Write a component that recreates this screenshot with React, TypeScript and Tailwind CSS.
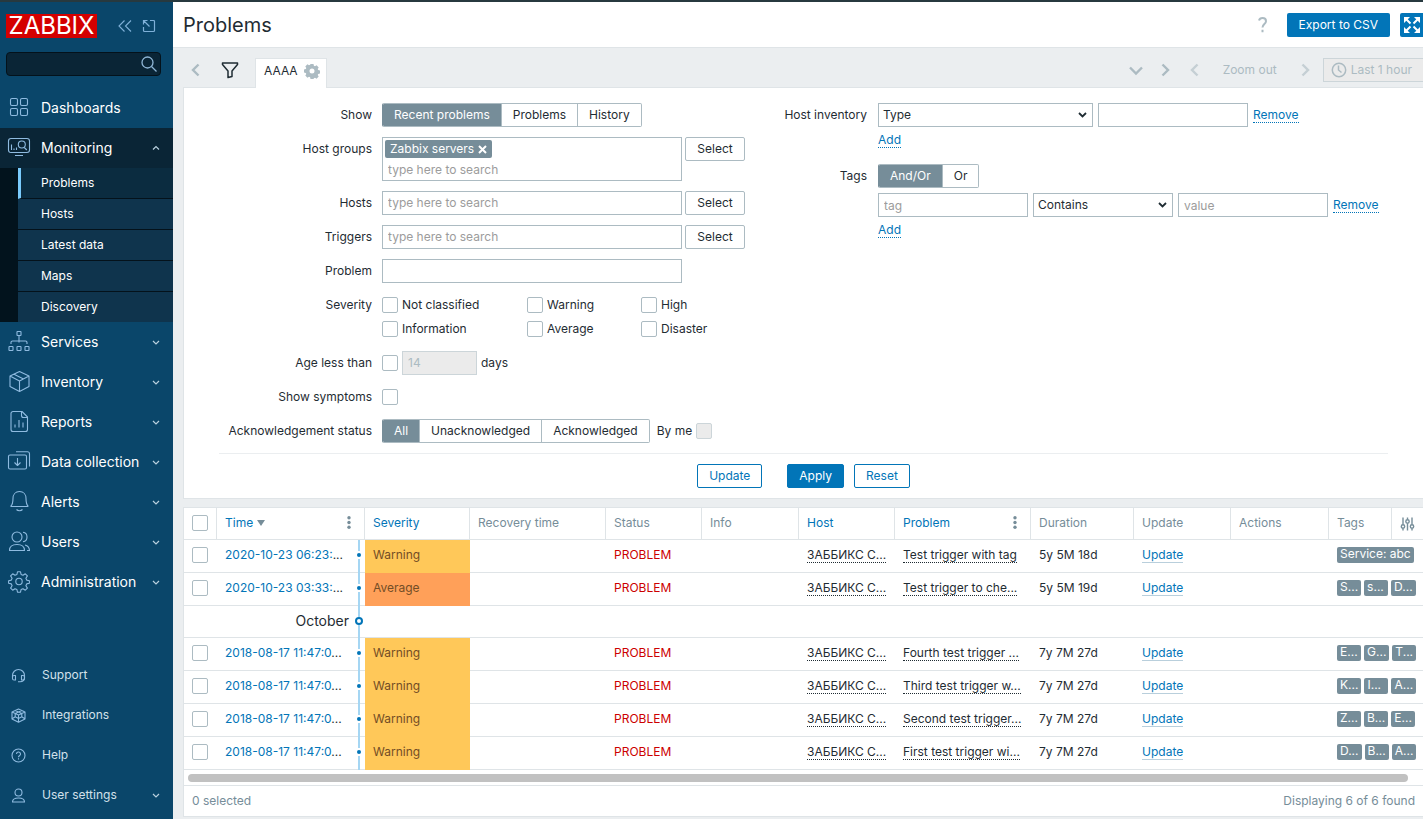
import type { ReactNode } from "react";

interface NavItem {
  label: string;
  icon: ReactNode;
}

interface ProblemRow {
  time: string;
  severity: "Warning" | "Average";
  problem: string;
  duration: string;
  tags: string[];
}

const mainMenu: NavItem[] = [
  {
    label: "Services",
    icon: (
      <>
        <rect x="9" y="0.5" width="4" height="4" rx="0.5" />
        <path d="M11 4.500v7M3 13v-1.500a1.500 1.500 0 0 1 1.500-1.500h13a1.500 1.500 0 0 1 1.500 1.500V13" />
        <rect x="1" y="15.500" width="4" height="4" rx="0.5" />
        <rect x="9" y="15.500" width="4" height="4" rx="0.5" />
        <rect x="17" y="15.500" width="4" height="4" rx="0.5" />
      </>
    ),
  },
  {
    label: "Inventory",
    icon: <path d="M11.500.500 21 5v10.500L11.500 20.500 2 15.500V5zM2 5l9.500 5L21 5M11.500 10v10.500M6 3.200l9.500 4.800" />,
  },
  {
    label: "Reports",
    icon: (
      <>
        <path d="M5 .5h9l5.500 5.500v12.500a2 2 0 0 1-2 2h-12.500a2 2 0 0 1-2-2V2.500a2 2 0 0 1 2-2zM13.500.500v4a2 2 0 0 0 2 2h4" />
        <path d="M7 16.500v-3M11 16.500V9M15 16.500v-5" />
      </>
    ),
  },
  {
    label: "Data collection",
    icon: (
      <>
        <rect x="0.5" y="4" width="18" height="14" rx="1.500" />
        <path d="M8 .8h11.500a2 2 0 0 1 2 2v12.700M9.500 7v7.500M6.500 11.500l3 3 3-3" />
      </>
    ),
  },
  {
    label: "Alerts",
    icon: <path d="M2.500 15.500h17.800M2.500 15.500c2.500-2 2.500-4.500 2.500-8 0-4 2.500-7 6.500-7s6.500 3 6.500 7c0 3.500.2 6 2.300 8M8.500 18.500c1.500 1.600 4.500 1.600 6 0" />,
  },
  {
    label: "Users",
    icon: (
      <>
        <circle cx="9" cy="6" r="5" />
        <path d="M1.500 19.500c0-4 3-6 7.500-6s7.500 2 7.500 6zM15 1.300c2.500.3 4 2.200 4 4.700s-1.500 4.400-4 4.700M17 14c2.500.6 4.300 2.500 4.500 5.500h-2.500" />
      </>
    ),
  },
  {
    label: "Administration",
    icon: (
      <>
        <circle cx="11" cy="10.500" r="3.200" />
        <path d="M9.500.800h3l.6 2.700 1.900.8 2.300-1.500 2.100 2.100-1.500 2.300.8 1.900 2.700.6v2.600l-2.700.6-.8 1.900 1.500 2.300-2.100 2.100-2.300-1.500-1.900.8-.6 2.700h-3l-.6-2.700-1.900-.8-2.300 1.500-2.100-2.100 1.500-2.300-.8-1.900-2.700-.6V9.700l2.700-.6.8-1.900-1.500-2.300 2.100-2.100L7 4.300l1.900-.8z" />
      </>
    ),
  },
];

const userMenu: NavItem[] = [
  {
    label: "Support",
    icon: (
      <>
        <path d="M1.500 9V7.500a6 6 0 0 1 12 0V9.500c0 2.500-1.500 4.200-4.500 4.200H7" />
        <path d="M4.500 7.500v4.500h-1.500a1.500 1.500 0 0 1-1.500-1.500V9a1.500 1.500 0 0 1 1.500-1.500zM10.500 7.500v4.500H12a1.500 1.500 0 0 0 1.500-1.500V9A1.500 1.500 0 0 0 12 7.500z" />
      </>
    ),
  },
  {
    label: "Integrations",
    icon: (
      <path d="M7.500 1 14 4v7l-6.500 3.300L1 11V4zM1 4l6.500 3L14 4M7.500 7v7.300M4.200 2.600l6.600 3v3.200M10.800 2.600l-6.600 3v3.200M1.200 10.800l3-2 3.300 1.600 3.300-1.600 3 2" />
    ),
  },
  {
    label: "Help",
    icon: (
      <>
        <circle cx="7.500" cy="7.500" r="6.500" />
        <path d="M5.500 6a2 2 0 1 1 3 1.700c-.7.400-1 .7-1 1.500M7.500 10.300v1.200" />
      </>
    ),
  },
  {
    label: "User settings",
    icon: (
      <>
        <circle cx="7.500" cy="4.500" r="3.500" />
        <path d="M1.500 14c0-2.700 2-4 6-4s6 1.300 6 4z" />
      </>
    ),
  },
];

const rows: (ProblemRow | string)[] = [
  { time: "2020-10-23 06:23:", severity: "Warning", problem: "Test trigger with tag", duration: "5y 5M 18d", tags: ["Service: abc"] },
  { time: "2020-10-23 03:33:", severity: "Average", problem: "Test trigger to che...", duration: "5y 5M 19d", tags: ["S...", "s...", "D..."] },
  "October",
  { time: "2018-08-17 11:47:0", severity: "Warning", problem: "Fourth test trigger ...", duration: "7y 7M 27d", tags: ["E...", "G...", "T..."] },
  { time: "2018-08-17 11:47:0", severity: "Warning", problem: "Third test trigger w...", duration: "7y 7M 27d", tags: ["K...", "I...", "A..."] },
  { time: "2018-08-17 11:47:0", severity: "Warning", problem: "Second test trigger...", duration: "7y 7M 27d", tags: ["Z...", "B...", "E..."] },
  { time: "2018-08-17 11:47:0", severity: "Warning", problem: "First test trigger wi...", duration: "7y 7M 27d", tags: ["D...", "B...", "A..."] },
];

const inputClass = "h-6 border border-[#acbbc2] bg-white px-[5px] placeholder:text-[#9c9c9c] outline-none";
const cellClass = "border-b border-[#dfe4e7] p-0 pl-2 pb-0.5";
const linkClass = "text-[#0275b8] border-b border-dotted border-[#0275b8] leading-[15px]";

function Chevron({ up = false }: { up?: boolean }) {
  return (
    <svg className="ml-auto mr-[13px] shrink-0" width="8" height="8" viewBox="0 0 8 8" fill="none" stroke="#b9d0de" strokeWidth="1.200">
      <path d={up ? "M1 5.500 4 2.500 7 5.500" : "M1 3 4 6 7 3"} />
    </svg>
  );
}

function Arrow({ dir, className = "" }: { dir: "left" | "right" | "down"; className?: string }) {
  const d = { left: "M9.500 1.500 4 7l5.500 5.500", right: "M4.500 1.500 10 7l-5.500 5.500", down: "M1 4.500 7 10.500 13 4.500" }[dir];
  return (
    <svg className={className} width="14" height="14" viewBox="0 0 14 14" fill="none" stroke="currentColor" strokeWidth="2.400">
      <path d={d} />
    </svg>
  );
}

function NavIcon({ children }: { children: ReactNode }) {
  return (
    <svg className="shrink-0 overflow-visible" width="22" height="22" viewBox="0 0 22 22" fill="none" stroke="#8fbbe0" strokeWidth="1.100" strokeLinejoin="round">
      {children}
    </svg>
  );
}

function Sidebar() {
  return (
    <aside className="w-[173px] shrink-0 flex flex-col bg-[#0a466a] text-white">
      <div className="flex items-center h-12 pl-1.5">
        <a href="#" className="flex items-center justify-center w-[91px] h-6 bg-[#d40000] text-2xl leading-6">ZABBIX</a>
        <button className="ml-[21px]" aria-label="Collapse sidebar">
          <svg width="14" height="14" viewBox="0 0 14 14" fill="none" stroke="#7fb0d8" strokeWidth="1.100">
            <path d="M6.500 1.500 1 7l5.500 5.500M13 1.500 7.500 7l5.500 5.500" />
          </svg>
        </button>
        <button className="ml-[10px]" aria-label="Hide sidebar">
          <svg width="14" height="14" viewBox="0 0 14 14" fill="none" stroke="#7fb0d8" strokeWidth="1.200">
            <path d="M1.500 8v3.500a1 1 0 0 0 1 1h9a1 1 0 0 0 1-1v-9a1 1 0 0 0-1-1H8M7.500 7.500l-6-6M1.500 5.500v-4h4" />
          </svg>
        </button>
      </div>
      <div className="flex items-center mx-1.5 mr-3 mt-[2px] h-6 rounded-sm border border-[#04121b] bg-[#0a2536]">
        <input type="text" aria-label="Search" className="min-w-0 flex-1 bg-transparent px-1 outline-none" />
        <button aria-label="Search" className="mr-[3px]">
          <svg width="16" height="16" viewBox="0 0 16 16" fill="none" stroke="#8fb6d6" strokeWidth="1.300">
            <circle cx="6.500" cy="6.500" r="5.500" />
            <path d="m10.500 10.500 5 5" />
          </svg>
        </button>
      </div>

      <nav className="mt-3 text-sm">
        <a href="#" className="flex items-center h-10 pl-2 gap-[11px]">
          <NavIcon>
            <rect x="2.500" y="1.500" width="7" height="7" rx="1.500" />
            <rect x="12.500" y="1.500" width="7" height="7" rx="1.500" />
            <rect x="2.500" y="11.500" width="7" height="7" rx="1.500" />
            <rect x="12.500" y="11.500" width="7" height="7" rx="1.500" />
          </NavIcon>
          Dashboards
        </a>
        <a href="#" className="flex items-center h-10 pl-2 gap-[11px] bg-[#0a2536]">
          <NavIcon>
            <rect x="0.5" y="1.500" width="21" height="14" rx="2.500" />
            <path d="M7 18.500h8M3.500 13V7.500M6 13v-1.500M8.500 13v-2.500M16.300 10.500l2.500 2.500" />
            <circle cx="13.800" cy="7.500" r="3.500" />
          </NavIcon>
          Monitoring
          <Chevron up />
        </a>
        <ul className="pl-[18px] bg-[#02131d] text-xs">
          <li>
            <a href="#" className="block h-[31px] leading-[30px] border-l-[3px] border-l-[#7acbfc] border-b border-b-[#04121b] bg-[#0b2c40] pl-5">Problems</a>
          </li>
          {["Hosts", "Latest data", "Maps", "Discovery"].map((label) => (
            <li key={label} className="border-b border-[#04121b] last:border-b-0">
              <a href="#" className="block h-[30px] leading-[30px] bg-[#0f344d] pl-[23px]">{label}</a>
            </li>
          ))}
        </ul>
        {mainMenu.map((item) => (
          <a key={item.label} href="#" className="flex items-center h-10 pl-2 gap-[11px]">
            <NavIcon>{item.icon}</NavIcon>
            {item.label}
            <Chevron />
          </a>
        ))}
      </nav>

      <nav className="mt-auto pb-1 text-[#d3e1ea]">
        {userMenu.map((item) => (
          <a key={item.label} href="#" className="flex items-center h-10 pl-[11px] gap-4">
            <svg className="shrink-0" width="15" height="15" viewBox="0 0 15 15" fill="none" stroke="#8fbbe0" strokeWidth="1.100" strokeLinejoin="round">
              {item.icon}
            </svg>
            {item.label}
            {item.label === "User settings" && <Chevron />}
          </a>
        ))}
      </nav>
    </aside>
  );
}

function PageHeader() {
  return (
    <header className="flex items-center h-[46px] bg-white border-b border-[#dfe4e7] pl-2.5">
      <h1 className="text-xl">Problems</h1>
      <a href="#" aria-label="Help" className="ml-auto mr-5">
        <svg width="9" height="16" viewBox="0 0 9 16" fill="none" stroke="#acbbc2" strokeWidth="2">
          <path d="M1 3.500C1.500 1.800 2.800 1 4.500 1 6.500 1 8 2.200 8 4.200c0 2.800-3.500 3-3.500 6.300M4.500 12.800v2.400" />
        </svg>
      </a>
      <button className="h-6 px-3 rounded-xs bg-[#0275b8] text-white">Export to CSV</button>
      <button aria-label="Kiosk mode" className="ml-2.5 flex items-center justify-center h-6 w-[23px] rounded-l-xs bg-[#0275b8]">
        <svg width="16" height="16" viewBox="0 0 16 16" fill="#fff" stroke="#fff" strokeWidth="2">
          <path stroke="none" d="M0 0h6L0 6zM10 0h6v6zM0 10v6h6zM16 10v6h-6z" />
          <path d="m2 2 4.500 4.500M14 2 9.500 6.500M2 14l4.500-4.500M14 14 9.500 9.500" />
        </svg>
      </button>
    </header>
  );
}

function FilterTabs() {
  return (
    <div className="flex items-end h-[39px] pl-1.5 text-[#acbbc2]">
      <button className="h-[35px]" aria-label="Previous tab"><Arrow dir="left" /></button>
      <button className="h-[35px] ml-[18px]" aria-label="Filter">
        <svg width="18" height="18" viewBox="0 0 18 18" fill="none" stroke="#1f2c33" strokeWidth="1.500" strokeLinejoin="round">
          <path d="M1.500 2h15v1.500L11 10v5.500l-4 1V10L1.500 3.500z" />
        </svg>
      </button>
      <button className="ml-4 -mb-px flex items-center h-[30px] pb-1.5 pl-2 pr-1.5 gap-1.5 border border-b-0 border-[#dfe4e7] bg-white text-[#1f2c33] whitespace-nowrap">
        AAAA
        <svg width="16" height="16" viewBox="0 0 16 16" fill="#acbbc2">
          <path fillRule="evenodd" d="M6.500 1h3l.4 1.800 1.100.5 1.600-1 2.100 2.100-1 1.600.5 1.100 1.800.4v3l-1.800.4-.5 1.100 1 1.600-2.100 2.100-1.600-1-1.100.5L9.500 16h-3l-.4-1.800-1.100-.5-1.600 1-2.100-2.100 1-1.600-.5-1.100L0 9.500v-3l1.800-.4.5-1.100-1-1.600 2.100-2.100 1.600 1 1.100-.5zM8 5.500a2.500 2.500 0 1 0 0 5 2.500 2.500 0 0 0 0-5z" />
        </svg>
      </button>
      <div className="ml-auto self-start mt-2.5 flex items-center h-6">
        <button aria-label="Tab list"><Arrow dir="down" /></button>
        <button className="ml-[15px]" aria-label="Next tab"><Arrow dir="right" /></button>
        <button className="ml-4 opacity-60" aria-label="Back in time"><Arrow dir="left" /></button>
        <button className="ml-[21px] whitespace-nowrap">Zoom out</button>
        <button className="ml-[21px] opacity-60" aria-label="Forward in time"><Arrow dir="right" /></button>
        <button className="ml-[11px] flex items-center h-6 pl-[7px] pr-[11px] gap-1 border border-r-0 border-[#ccd5d9] bg-[#ebebeb] whitespace-nowrap">
          <svg width="16" height="16" viewBox="0 0 16 16" fill="none" stroke="currentColor" strokeWidth="1.500">
            <circle cx="8" cy="8" r="6.700" />
            <path d="M7.500 3.500V8l3 2.500" />
          </svg>
          Last 1 hour
        </button>
      </div>
    </div>
  );
}

function Segmented({ name, options }: { name: string; options: string[] }) {
  return (
    <div role="radiogroup" aria-label={name} className="flex w-fit h-6 rounded-xs border border-[#acbbc2] has-[label:first-child>input:checked]:border-l-[#768d99] overflow-hidden leading-4">
      {options.map((label, i) => (
        <label key={label} className="flex items-center px-[11px] border-l border-[#acbbc2] first:border-l-0 has-checked:bg-[#768d99] has-checked:text-white cursor-pointer">
          <input type="radio" name={name} defaultChecked={i === 0} className="sr-only" />
          {label}
        </label>
      ))}
    </div>
  );
}

function Check({ id, label, disabled = false }: { id: string; label?: string; disabled?: boolean }) {
  return (
    <input
      type="checkbox"
      id={id}
      aria-label={label}
      disabled={disabled}
      className="appearance-none size-4 shrink-0 rounded-xs border border-[#acbbc2] bg-white disabled:bg-[#ebebeb] disabled:border-[#ccd5d9]"
    />
  );
}

function SelectButton() {
  return <button className="h-6 w-[60px] rounded-xs border border-[#acbbc2] leading-4">Select</button>;
}

function DropDown({ label, value, className }: { label: string; value: string; className: string }) {
  return (
    <div className={`grid items-center ${className}`}>
      <select aria-label={label} className="col-start-1 row-start-1 appearance-none w-full h-6 border border-[#acbbc2] bg-white px-1 outline-none">
        <option>{value}</option>
      </select>
      <svg className="col-start-1 row-start-1 justify-self-end mr-1.5 pointer-events-none" width="9" height="8" viewBox="0 0 9 8" fill="none" stroke="#1f2c33" strokeWidth="1.800">
        <path d="M1 2l3.500 3.500L8 2" />
      </svg>
    </div>
  );
}

function LeftFilters() {
  return (
    <div className="grid grid-cols-[153px_auto] gap-2.5 leading-6 content-start">
      <span className="text-right">Show</span>
      <Segmented name="Show" options={["Recent problems", "Problems", "History"]} />

      <label htmlFor="groups" className="text-right">Host groups</label>
      <div className="flex items-start gap-[3px]">
        <div className="w-[300px] h-11 border border-[#acbbc2] px-0.5 pt-0.5">
          <span className="flex w-fit items-center h-[18px] px-[5px] gap-1 rounded-xs bg-[#768d99] text-white">
            Zabbix servers
            <button aria-label="Remove Zabbix servers">
              <svg width="9" height="9" viewBox="0 0 9 9" stroke="#fff" strokeWidth="2"><path d="m1 1 7 7M8 1 1 8" /></svg>
            </button>
          </span>
          <input id="groups" type="text" placeholder="type here to search" className="block w-full h-6 px-[3px] placeholder:text-[#9c9c9c] outline-none" />
        </div>
        <SelectButton />
      </div>

      <label htmlFor="hosts" className="text-right">Hosts</label>
      <div className="flex gap-[3px]">
        <input id="hosts" type="text" placeholder="type here to search" className={`${inputClass} w-[300px]`} />
        <SelectButton />
      </div>

      <label htmlFor="triggers" className="text-right">Triggers</label>
      <div className="flex gap-[3px]">
        <input id="triggers" type="text" placeholder="type here to search" className={`${inputClass} w-[300px]`} />
        <SelectButton />
      </div>

      <label htmlFor="problem" className="text-right">Problem</label>
      <input id="problem" type="text" className={`${inputClass} w-[300px]`} />

      <span className="text-right">Severity</span>
      <div className="grid grid-cols-[145px_114px_auto] justify-start">
        {["Not classified", "Warning", "High", "Information", "Average", "Disaster"].map((label) => (
          <div key={label} className="flex items-center h-6 gap-1">
            <Check id={`severity-${label}`} />
            <label htmlFor={`severity-${label}`}>{label}</label>
          </div>
        ))}
      </div>

      <label htmlFor="age" className="text-right">Age less than</label>
      <div className="flex items-center gap-1">
        <Check id="age" />
        <input type="text" aria-label="Days" disabled defaultValue="14" className="w-[75px] h-6 border border-[#ccd5d9] bg-[#ebebeb] px-[5px] text-[#acbbc2]" />
        days
      </div>

      <label htmlFor="symptoms" className="text-right">Show symptoms</label>
      <div className="flex items-center"><Check id="symptoms" /></div>

      <span className="text-right whitespace-nowrap">Acknowledgement status</span>
      <div className="flex items-center">
        <Segmented name="Acknowledgement status" options={["All", "Unacknowledged", "Acknowledged"]} />
        <label htmlFor="by-me" className="ml-[7px] mr-1">By me</label>
        <Check id="by-me" disabled />
      </div>
    </div>
  );
}

function RightFilters() {
  return (
    <div className="grid grid-cols-[90px_auto] gap-x-[11px] gap-y-3 content-start">
      <span className="text-right leading-6">Host inventory</span>
      <div>
        <div className="flex items-center gap-[5px]">
          <DropDown label="Inventory field" value="Type" className="w-[215px]" />
          <input type="text" aria-label="Inventory value" className={`${inputClass} w-[150px]`} />
          <button className={linkClass}>Remove</button>
        </div>
        <div className="flex items-center h-[25px]"><button className={linkClass}>Add</button></div>
      </div>
      <span className="text-right leading-6">Tags</span>
      <div>
        <Segmented name="Tags" options={["And/Or", "Or"]} />
        <div className="flex items-center gap-[5px] mt-[5px]">
          <input type="text" aria-label="Tag" placeholder="tag" className={`${inputClass} w-[150px]`} />
          <DropDown label="Operator" value="Contains" className="w-[140px]" />
          <input type="text" aria-label="Value" placeholder="value" className={`${inputClass} w-[150px]`} />
          <button className={linkClass}>Remove</button>
        </div>
        <div className="flex items-center h-[25px]"><button className={linkClass}>Add</button></div>
      </div>
    </div>
  );
}

function Filter() {
  return (
    <form className="border border-r-0 border-[#dfe4e7] bg-white pl-[35px] pr-[35px] pt-[15px] pb-2.5" onSubmit={(e) => e.preventDefault()}>
      <div className="flex gap-8">
        <LeftFilters />
        <RightFilters />
      </div>
      <div className="mt-2.5 pt-2.5 flex justify-center border-t border-[#ebeef0]">
        <button className="h-6 px-[11px] rounded-xs border border-[#0275b8] text-[#0275b8]">Update</button>
        <button className="h-6 px-[11px] ml-[25px] rounded-xs border border-[#0275b8] bg-[#0275b8] text-white">Apply</button>
        <button className="h-6 px-[11px] ml-2.5 rounded-xs border border-[#0275b8] text-[#0275b8]">Reset</button>
      </div>
    </form>
  );
}

function Kebab() {
  return (
    <svg width="4" height="13" viewBox="0 0 4 13" fill="#768d99">
      <circle cx="2" cy="1.800" r="1.700" />
      <circle cx="2" cy="6.500" r="1.700" />
      <circle cx="2" cy="11.200" r="1.700" />
    </svg>
  );
}

function Timeline({ month = false }: { month?: boolean }) {
  return (
    <div className={`flex flex-col items-center -mb-px ${month ? "h-8" : "h-[33px]"}`}>
      <span className="h-[11px] w-0.5 bg-[#a5d6f3]" />
      {month ? (
        <span className="size-2 rounded-full border-2 border-[#0275b8] bg-white" />
      ) : (
        <span className="size-1 my-0.5 rounded-full bg-[#0275b8]" />
      )}
      <span className="flex-1 w-0.5 bg-[#a5d6f3]" />
    </div>
  );
}

function ProblemsTable() {
  const th = "h-8 p-0 pl-2 pb-0.5 border-b border-r border-[#dfe4e7] text-left font-normal text-[#768d99]";
  return (
    <table className="w-full table-fixed border-separate border-spacing-0 whitespace-nowrap">
      <colgroup>
        <col className="w-[33px]" />
        <col className="w-[136px]" />
        <col className="w-[12px]" />
        <col className="w-[105px]" />
        <col className="w-[136px]" />
        <col className="w-[96px]" />
        <col className="w-[97px]" />
        <col className="w-[96px]" />
        <col className="w-[136px]" />
        <col className="w-[103px]" />
        <col className="w-[97px]" />
        <col className="w-[98px]" />
        <col className="w-[63px]" />
        <col className="w-[31px]" />
      </colgroup>
      <thead>
        <tr>
          <th className={th}><div className="flex"><Check id="all" label="Select all" /></div></th>
          <th className={th} colSpan={2}>
            <div className="flex items-center">
              <a href="#" className="text-[#0275b8]">Time</a>
              <svg className="ml-1" width="8" height="6" viewBox="0 0 8 6" fill="#768d99"><path d="M0 0h8L4 6z" /></svg>
              <button className="ml-auto mr-[13px]" aria-label="Time options"><Kebab /></button>
            </div>
          </th>
          <th className={th}><a href="#" className="text-[#0275b8]">Severity</a></th>
          <th className={th}>Recovery time</th>
          <th className={th}>Status</th>
          <th className={th}>Info</th>
          <th className={th}><a href="#" className="text-[#0275b8]">Host</a></th>
          <th className={th}>
            <div className="flex items-center">
              <a href="#" className="text-[#0275b8]">Problem</a>
              <button className="ml-auto mr-[13px]" aria-label="Problem options"><Kebab /></button>
            </div>
          </th>
          <th className={th}>Duration</th>
          <th className={th}>Update</th>
          <th className={th}>Actions</th>
          <th className={th}>Tags</th>
          <th className="p-0 pl-2 border-b border-[#dfe4e7]">
            <button className="flex" aria-label="Columns">
              <svg width="15" height="14" viewBox="0 0 15 14" fill="none" stroke="#768d99" strokeWidth="1.400">
                <path d="M3 .500v7M3 11.500v2M7.500.500v2M7.500 6.500v7M12 .500v7M12 11.500v2" />
                <circle cx="3" cy="9.500" r="1.700" />
                <circle cx="7.500" cy="4.500" r="1.700" />
                <circle cx="12" cy="9.500" r="1.700" />
              </svg>
            </button>
          </th>
        </tr>
      </thead>
      <tbody>
        {rows.map((row, i) =>
          typeof row === "string" ? (
            <tr key={row}>
              <td className={`${cellClass} text-right text-sm leading-4 pr-1`} colSpan={2}>{row}</td>
              <td className="border-b border-[#dfe4e7] p-0"><Timeline month /></td>
              <td className={cellClass} colSpan={11} />
            </tr>
          ) : (
            <tr key={i}>
              <td className={cellClass}><div className="flex"><Check id={`row-${i}`} label="Select problem" /></div></td>
              <td className={cellClass}><a href="#" className="text-[#0275b8]">{row.time}</a>...</td>
              <td className="border-b border-[#dfe4e7] p-0"><Timeline /></td>
              <td className={`p-0 pl-2 pb-0.5 border-b text-[#734d26] ${row.severity === "Average" ? "bg-[#ffa059] border-[#ffa059]" : "bg-[#ffc859] border-[#ffc859]"}`}>{row.severity}</td>
              <td className={cellClass} />
              <td className={`${cellClass} text-[#cc0000]`}>PROBLEM</td>
              <td className={cellClass} />
              <td className={cellClass}><a href="#" className="border-b border-dotted border-[#1f2c33]">ЗАББИКС С...</a></td>
              <td className={cellClass}><a href="#" className="border-b border-dotted border-[#1f2c33]">{row.problem}</a></td>
              <td className={cellClass}>{row.duration}</td>
              <td className={cellClass}><a href="#" className="text-[#0275b8] border-b border-[#b9cfdc]">Update</a></td>
              <td className={cellClass} />
              <td className={cellClass} colSpan={2}>
                <div className="flex gap-[3px]">
                  {row.tags.map((tag) => (
                    <span key={tag} className="h-4 min-w-6 px-[3px] rounded-xs bg-[#768d99] text-white leading-[14px]">{tag}</span>
                  ))}
                </div>
              </td>
            </tr>
          ),
        )}
      </tbody>
    </table>
  );
}

export default function App() {
  return (
    <div className="flex min-h-screen border-t-2 border-[#27393f] bg-[#ebeef0] text-xs text-[#1f2c33] font-[Inter,'Noto_Sans',sans-serif]">
      <Sidebar />
      <div className="flex-1 min-w-0 flex flex-col">
        <PageHeader />
        <main className="pl-2.5">
          <FilterTabs />
          <Filter />
          <section className="mt-2 border border-r-0 border-[#dfe4e7] bg-white overflow-hidden">
            <ProblemsTable />
            <div className="flex items-center h-[15px] pl-1 pr-[15px]">
              <div className="h-2 flex-1 rounded-full bg-[#c1c1c1]" />
            </div>
            <div className="flex items-center justify-between h-[31px] px-2 border-t border-[#dfe4e7] text-[#768d99]">
              <span>0 selected</span>
              <span>Displaying 6 of 6 found</span>
            </div>
          </section>
        </main>
      </div>
    </div>
  );
}
